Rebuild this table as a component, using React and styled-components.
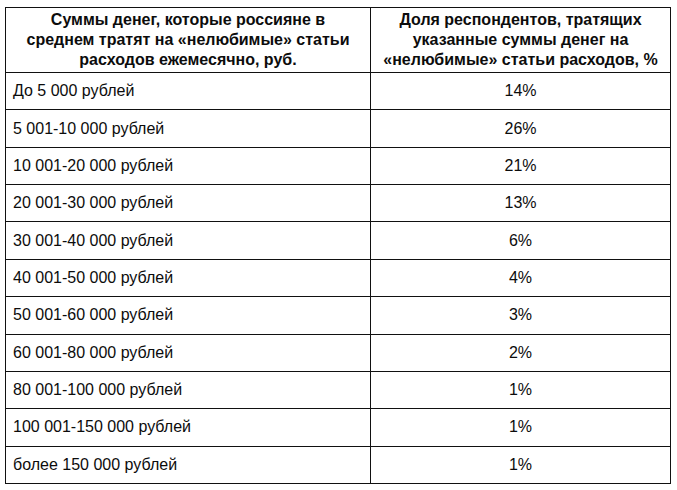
import React from 'react'
import styled, { createGlobalStyle } from 'styled-components'

const rows = [
  ['До 5 000 рублей', '14%'],
  ['5 001-10 000 рублей', '26%'],
  ['10 001-20 000 рублей', '21%'],
  ['20 001-30 000 рублей', '13%'],
  ['30 001-40 000 рублей', '6%'],
  ['40 001-50 000 рублей', '4%'],
  ['50 001-60 000 рублей', '3%'],
  ['60 001-80 000 рублей', '2%'],
  ['80 001-100 000 рублей', '1%'],
  ['100 001-150 000 рублей', '1%'],
  ['более 150 000 рублей', '1%']
]

const App = () => (
  <Page>
    <GlobalStyle />
    <Table>
      <colgroup>
        <col style={{ width: 365 }} />
        <col style={{ width: 300 }} />
      </colgroup>
      <thead>
        <tr>
          <HeadCell>
            Суммы денег, которые россияне в<br />
            среднем тратят на «нелюбимые» статьи<br />
            расходов ежемесячно, руб.
          </HeadCell>
          <HeadCell>
            Доля респондентов, тратящих<br />
            указанные суммы денег на<br />
            «нелюбимые» статьи расходов, %
          </HeadCell>
        </tr>
      </thead>
      <tbody>
        {rows.map(([range, share]) => (
          <Row key={range}>
            <Cell>{range}</Cell>
            <Cell center>{share}</Cell>
          </Row>
        ))}
      </tbody>
    </Table>
  </Page>
)

const GlobalStyle = createGlobalStyle`
  body {
    margin: 0;
    background: #fff;
    font-family: "Liberation Sans", Arial, sans-serif;
    color: #0c0c0c;
  }
`

const Page = styled.div`
  padding: 7px 0 0 5px;
`

const Table = styled.table`
  border-collapse: collapse;
  table-layout: fixed;
  width: 666px;
  font-size: 16px;
`

const HeadCell = styled.th`
  border: 1px solid #111;
  height: 64px;
  padding: 0 2px;
  font-weight: bold;
  line-height: 20px;
  text-align: center;
  vertical-align: middle;
`

const Row = styled.tr`
  height: 37.36px;
`

const Cell = styled.td`
  border: 1px solid #111;
  padding: 0 0 0 7px;
  text-align: ${p => (p.center ? 'center' : 'left')};
  vertical-align: middle;
  ${p => p.center && 'padding: 0;'}
`

export default App
